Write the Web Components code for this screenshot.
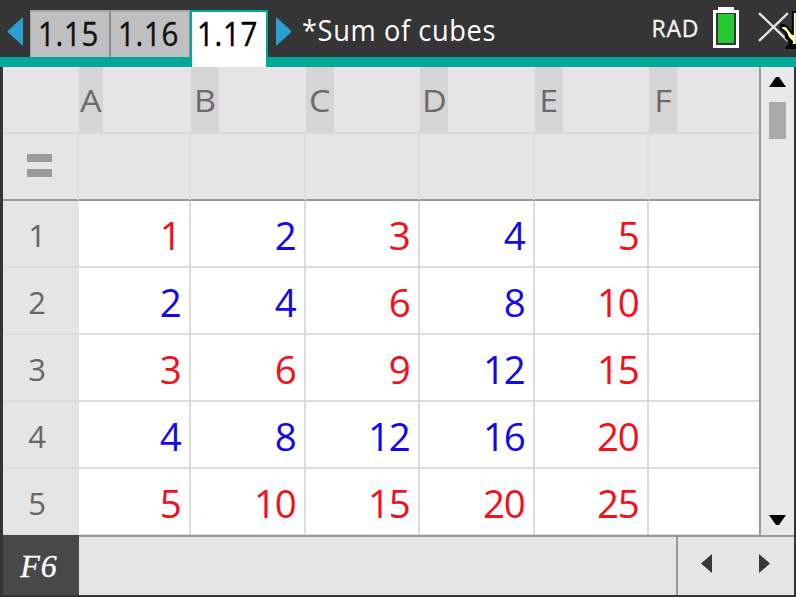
<!DOCTYPE html>
<html lang="en"><head><meta charset="utf-8"><title>Sum of cubes</title>
<style>html,body{margin:0;width:796px;height:597px;overflow:hidden;background:#353535}</style></head>
<body><calc-screen></calc-screen>
<script>
const define=(name,html,setup)=>customElements.define(name,class extends HTMLElement{
  connectedCallback(){
    if(this.shadowRoot)return;
    this.attachShadow({mode:'open'}).innerHTML='<style>*{box-sizing:border-box}svg{display:block}</style>'+html;
    if(setup)setup(this,this.shadowRoot);
  }
});
define('doc-tab',`<style>
:host{display:block;box-sizing:border-box;width:80px;height:47px;background:#c0c0c0;border-top:2px solid #a5a5a5;border-right:2px solid #8c8c8c;color:#111;font-size:32px;line-height:43px;letter-spacing:.8px;padding-left:7px;white-space:nowrap}
:host([first]){width:81px;border-left:1px solid #a5a5a5}
:host([active]){width:78px;height:57px;background:#fff;border:2px solid #00a898;border-bottom:0;padding-left:5px;color:#000;margin-left:-1px}
span{display:block;width:70px;transform:scaleX(.92);transform-origin:0 0;-webkit-text-stroke:.4px currentColor}
</style><span><slot></slot></span>`);
define('doc-header',`<style>
:host{display:flex;box-sizing:border-box;height:67px;background:linear-gradient(#353535 57px,#00a898 57px);padding:10px 0 0 7px;align-items:flex-start;overflow:hidden}
.l{margin:7px 7px 0 0}.r{margin:7px 0 0 8px}
.t{color:#fff;font-size:29.5px;line-height:40px;letter-spacing:.65px;margin-left:11px;white-space:nowrap;width:350px;transform:scaleX(.923);transform-origin:0 0}
.rad{color:#f4f4f4;font-size:23px;line-height:37px;letter-spacing:.8px;width:62px;-webkit-text-stroke:.3px #f4f4f4}
.bat{margin-top:-3px}.x{margin:-1px 0 0 16px}
</style>
<svg class="l" width="16" height="29"><path d="M16 0v29L0 14.5z" fill="#2b9fd2"/></svg>
<doc-tab first>1.15</doc-tab><doc-tab>1.16</doc-tab><doc-tab active>1.17</doc-tab>
<svg class="r" width="16" height="29"><path d="M0 0v29l16-14.5z" fill="#2b9fd2"/></svg>
<div class="t">*Sum of cubes</div><div class="rad">RAD</div>
<svg class="bat" width="26" height="41"><path d="M5 0h16v3h5v38H0V3h5z" fill="#fff"/><path d="M3 6h20v32H3z" fill="#353535"/><path d="M5 7h16v29H5z" fill="#26cb34"/></svg>
<svg class="x" width="41" height="42" viewBox="755 9 41 42"><path d="M759 13l29 28M788 13l-29 28" stroke="#e4e4e4" stroke-width="2.4" fill="none"/><path d="M796 11h-4v20l-7-7h-5v5l5 4v5l4 4v3l-3 1v3h10z" fill="#000"/><path d="M796 13h-2v22h-2l-6-8h-4v1l5 4 2 5 4 4v3h3z" fill="#ffffb4"/></svg>`);
define('col-head',`<style>
:host{display:block;border-bottom:2px solid #d9d9d9;box-sizing:border-box;color:#6a6a6a;font-size:31px;line-height:67px}
div{width:28px;height:65px;background:#d5d5d5;text-align:center}
span{display:inline-block;transform:scaleX(1.1)}
:host([narrow]) div{width:24px}
</style><div><span><slot></slot></span></div>`);
define('row-head',`<style>
:host{display:block;box-sizing:border-box;text-align:center;padding-right:8px;border-bottom:2px solid #dcdcdc;font-size:31px;line-height:69px;color:#666}
</style><slot></slot>`);
define('formula-cell',`<style>
:host{display:flex;box-sizing:border-box;border-right:2px solid #dcdcdc;border-bottom:2px solid #989898;background:#e5e5e5}
:host([last]){border-right:0}
div{margin:20px 0 0 24px;width:25px;height:23px;border:solid #9b9b9b;border-width:8px 0}
</style>`,(h,r)=>{if(h.hasAttribute('sign'))r.appendChild(document.createElement('div'))});
define('num-cell',`<style>
:host{display:block;box-sizing:border-box;background:#fff;border-right:2px solid #dcdcdc;border-bottom:2px solid #dcdcdc;text-align:right;padding-right:7px;font-size:38.5px;line-height:69px;letter-spacing:-1.3px;color:#f2101c;overflow:hidden}
:host([blue]){color:#1409e6}:host([last]){border-right:0}
span{display:block;padding-right:1.5px}
</style><span><slot></slot></span>`);
define('sheet-grid',`<style>
:host{display:grid;grid-template-columns:76px 112px 115px 114px 115px 114px 110px;grid-template-rows:repeat(7,67px);background:#e5e5e5;height:468px;overflow:hidden}
.c{border-bottom:2px solid #d9d9d9}
</style>`,(h,r)=>{
  let s='<div class="c"></div>';
  [...'ABCDEF'].forEach((c,i)=>s+=`<col-head ${i?'':'narrow'}>${c}</col-head>`);
  s+='<formula-cell sign></formula-cell>';
  for(let i=0;i<6;i++)s+=`<formula-cell ${i==5?'last':''}></formula-cell>`;
  const blue=['01010','11010','00010','11110','00000'];
  for(let y=1;y<6;y++){
    s+=`<row-head>${y}</row-head>`;
    for(let x=1;x<6;x++)s+=`<num-cell ${blue[y-1][x-1]==='1'?'blue':''}>${x*y}</num-cell>`;
    s+='<num-cell last></num-cell>';
  }
  r.innerHTML+=s;
});
define('scroll-bar',`<style>
:host{display:flex;flex-direction:column;align-items:center;box-sizing:border-box;width:35px;border-left:2px solid #989898;background:#e8eae9;padding:10px 0 10px}
i{width:17px;height:37px;background:#aaa;margin:15px 0 auto}
</style><svg width="17" height="10"><path d="M0 10L7 0h3l7 10z"/></svg><i></i><svg width="17" height="10"><path d="M0 0l7 10h3l7-10z"/></svg>`);
define('status-bar',`<style>
:host{display:flex;height:60px;background:#e5e5e5}
.f{width:76px;background:#484848;color:#fff;font:italic 32px/63px "Liberation Serif",serif;letter-spacing:1px;text-align:center;padding-right:4px;-webkit-text-stroke:.3px #fff;overflow:hidden}
.v{width:599px;border-top:2px solid #989898;border-right:2px solid #989898}
.n{flex:1;border-top:2px solid #989898;display:flex;padding:17px 0 0 23px;gap:47px}
</style><div class="f">F6</div><div class="v"></div><div class="n"><svg width="11" height="19"><path d="M11 0v19L0 9.5z" fill="#383838"/></svg><svg width="11" height="19"><path d="M0 0v19l11-9.5z" fill="#383838"/></svg></div>`);
define('calc-screen',`<style>
:host{display:block;width:796px;height:597px;background:#353535;font-family:"Open Sans","Noto Sans",sans-serif}
.m{margin:0 2px 0 3px}.b{display:flex}sheet-grid{width:756px}
</style><doc-header></doc-header><div class="m"><div class="b"><sheet-grid></sheet-grid><scroll-bar></scroll-bar></div><status-bar></status-bar></div>`);
</script></body></html>
